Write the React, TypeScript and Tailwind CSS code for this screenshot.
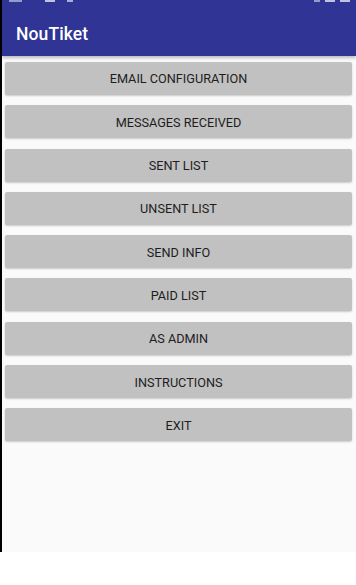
import React from "react";

const items = [
  "EMAIL CONFIGURATION",
  "MESSAGES RECEIVED",
  "SENT LIST",
  "UNSENT LIST",
  "SEND INFO",
  "PAID LIST",
  "AS ADMIN",
  "INSTRUCTIONS",
  "EXIT",
];

export default function App() {
  return (
    <div className="w-[356px] h-[585px] bg-white flex flex-col overflow-hidden" style={{ fontFamily: "Roboto, 'Noto Sans', sans-serif" }}>
      <div className="h-[552px] flex">
        <div className="w-[2px] bg-black" />
        <div className="flex-1 bg-[#fafafa] flex flex-col">
          <div className="relative h-[56px] bg-[#303494] shadow-[0_2px_3px_rgba(0,0,0,0.25)] flex items-center pl-[14px] pt-[12px]">
            <div className="absolute top-0 left-[7px] flex">
              <div className="h-[1.5px] w-[13px] bg-white/50" />
              <div className="h-[1.5px] w-[10px] bg-white/70 ml-[23px]" />
              <div className="h-[1.5px] w-[6px] bg-white/60 ml-[12px]" />
            </div>
            <div className="absolute top-0 right-[6px] flex">
              <div className="h-[1.5px] w-[6px] bg-white/50" />
              <div className="h-[1.5px] w-[10px] bg-white/70 ml-[5px]" />
              <div className="h-[1.5px] w-[10px] bg-white/70 ml-[5px]" />
            </div>
            <span className="text-white text-[17.5px] font-medium tracking-[0.1px]">NouTiket</span>
          </div>
          <div className="flex flex-col gap-[10.3px] pt-[6px] pl-[3px] pr-[4px]">
            {items.map((t) => (
              <div
                key={t}
                className="h-[33px] bg-[#c1c1c1] rounded-[2px] shadow-[0_1px_2px_rgba(0,0,0,0.2)] flex items-center justify-center pt-[1px] text-[12.7px] text-[#1e1e1e]"
              >
                {t}
              </div>
            ))}
          </div>
        </div>
      </div>
    </div>
  );
}
